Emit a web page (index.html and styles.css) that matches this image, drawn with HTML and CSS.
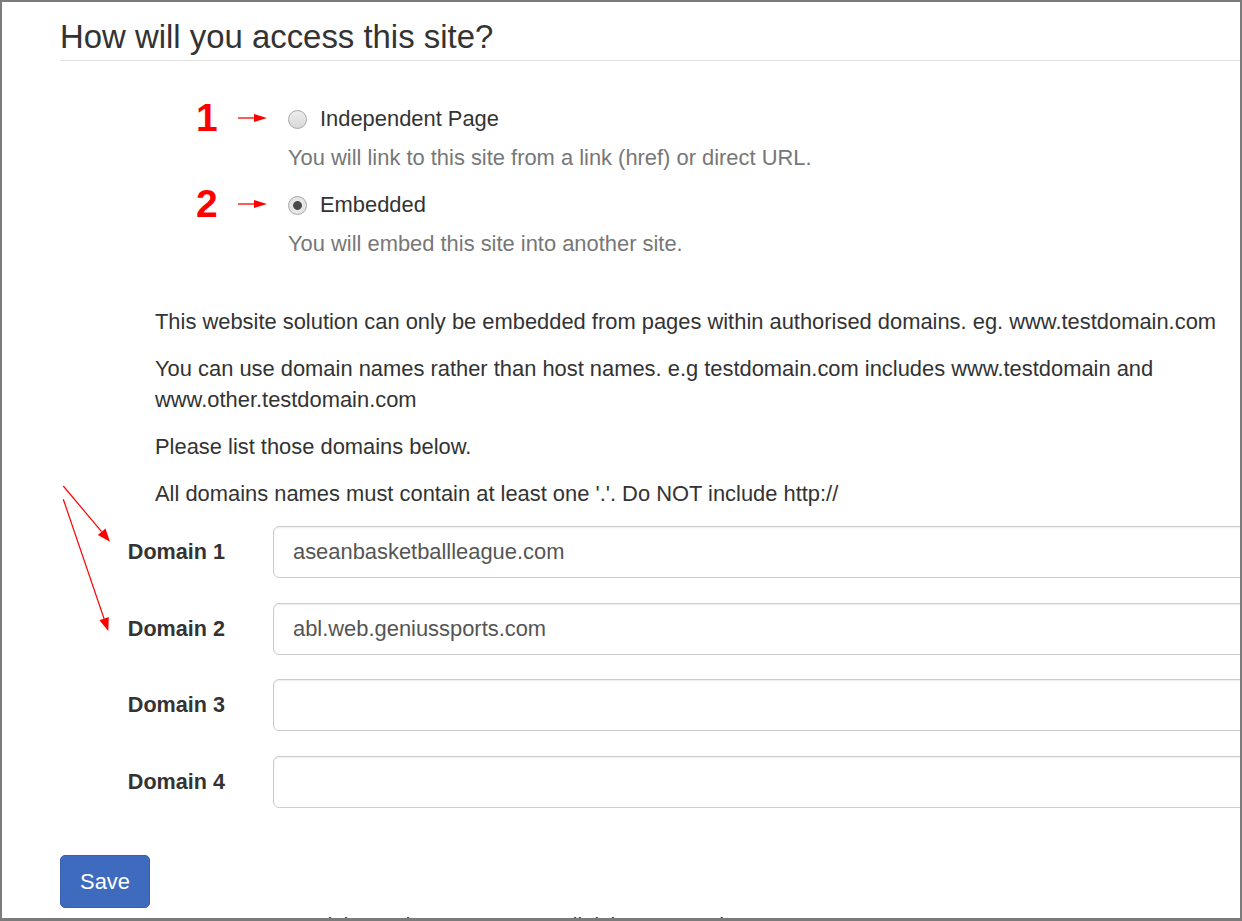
FILE: index.html
```html
<!DOCTYPE html>
<html lang="en">
<head>
<meta charset="utf-8">
<title>How will you access this site?</title>
<link rel="stylesheet" href="styles.css">
</head>
<body>
<div class="frame">
  <div class="page">
    <h1 class="title">How will you access this site?</h1>

    <div class="access">
      <div class="choice">
        <div class="marker">
          <span class="num">1</span>
          <svg class="pointer" width="30" height="10" viewBox="0 0 30 10"><line x1="0" y1="5" x2="17" y2="5" stroke="#ff0000" stroke-width="1.3"/><polygon points="16,1 29,5 16,9" fill="#ff0000"/></svg>
        </div>
        <label class="option"><span class="radio"></span>Independent Page</label>
        <p class="help">You will link to this site from a link (href) or direct URL.</p>
      </div>
      <div class="choice">
        <div class="marker">
          <span class="num">2</span>
          <svg class="pointer" width="30" height="10" viewBox="0 0 30 10"><line x1="0" y1="5" x2="17" y2="5" stroke="#ff0000" stroke-width="1.3"/><polygon points="16,1 29,5 16,9" fill="#ff0000"/></svg>
        </div>
        <label class="option"><span class="radio checked"></span>Embedded</label>
        <p class="help">You will embed this site into another site.</p>
      </div>
    </div>

    <div class="info">
      <p>This website solution can only be embedded from pages within authorised domains. eg. www.testdomain.com</p>
      <p>You can use domain names rather than host names. e.g testdomain.com includes www.testdomain and www.other.testdomain.com</p>
      <p>Please list those domains below.</p>
      <p>All domains names must contain at least one '.'. Do NOT include http://</p>
    </div>

    <div class="domains">
      <svg class="callout" width="60" height="160" viewBox="0 0 60 160">
        <line x1="3.3" y1="5" x2="41.6" y2="50.7" stroke="#ff0000" stroke-width="1.2"/>
        <polygon points="50,60.7 37.8,54 45.5,47.5" fill="#ff0000"/>
        <line x1="3.3" y1="18.3" x2="44.1" y2="137.7" stroke="#ff0000" stroke-width="1.2"/>
        <polygon points="48.3,150 39.4,139.3 48.8,136.1" fill="#ff0000"/>
      </svg>
      <div class="field"><label class="field-label">Domain 1</label><input class="field-input" type="text" value="aseanbasketballleague.com"></div>
      <div class="field"><label class="field-label">Domain 2</label><input class="field-input" type="text" value="abl.web.geniussports.com"></div>
      <div class="field"><label class="field-label">Domain 3</label><input class="field-input" type="text" value=""></div>
      <div class="field"><label class="field-label">Domain 4</label><input class="field-input" type="text" value=""></div>
    </div>

    <button class="save" type="button">Save</button>
    <footer class="footer">© Copyright Genius Sports 2019. All rights reserved.</footer>
  </div>
</div>
</body>
</html>
```

FILE: styles.css
```css
html, body {
  margin: 0;
  padding: 0;
  background: #ffffff;
}

body {
  font-family: "Liberation Sans", Arial, sans-serif;
  color: #333333;
}

.frame {
  box-sizing: border-box;
  width: 1242px;
  height: 921px;
  border-style: solid;
  border-color: #7b7b7b;
  border-width: 2px 2px 3px 2px;
  overflow: hidden;
  background: #ffffff;
}

.page {
  width: 1260px;
  padding-left: 58px;
}

.title {
  margin: 17px 0 0;
  padding-bottom: 5px;
  font-size: 32.9px;
  line-height: 36px;
  font-weight: 400;
  color: #333333;
  border-bottom: 1px solid #e1e1e1;
}

.access {
  margin: 42px 0 0 135px;
  display: flex;
  flex-direction: column;
  gap: 16px;
}

.choice {
  display: grid;
  grid-template-columns: 93px 1fr;
  row-gap: 8px;
  font-size: 21.9px;
  line-height: 31px;
}

.marker {
  display: flex;
  align-items: center;
  height: 31px;
  margin-top: -1px;
}

.num {
  display: inline-block;
  width: 43px;
  padding-left: 1px;
  margin-right: -1px;
  font-size: 39px;
  line-height: 31px;
  font-weight: 700;
  color: #ff0000;
}

.pointer {
  display: block;
}

.option {
  display: flex;
  align-items: center;
  gap: 13px;
  color: #333333;
}

.radio {
  box-sizing: border-box;
  width: 19px;
  height: 19px;
  border-radius: 50%;
  border: 1px solid #a9a9a9;
  background: linear-gradient(#ededed, #d9d9d9);
  flex: none;
  position: relative;
  top: 1px;
}

.radio.checked {
  background: radial-gradient(circle, #4a4a4a 0 4px, #e9e9e9 4.8px, #dcdcdc 100%);
}

.help {
  grid-column: 2;
  margin: 0;
  color: #777777;
}

.info {
  margin: 47px 0 0 95px;
  width: 1140px;
  font-size: 21.9px;
  line-height: 31px;
}

.info p {
  margin: 0 0 16px;
}

.domains {
  position: relative;
  margin-top: 17px;
  display: flex;
  flex-direction: column;
  gap: 24.5px;
}

.callout {
  position: absolute;
  left: 0;
  top: -45px;
  overflow: visible;
}

.field {
  display: grid;
  grid-template-columns: 213px 1fr;
  align-items: center;
}

.field-label {
  padding-right: 48px;
  text-align: right;
  font-weight: 700;
  font-size: 21.6px;
  color: #333333;
}

.field-input {
  box-sizing: border-box;
  height: 52px;
  width: 100%;
  padding: 0 19px;
  border: 1px solid #cccccc;
  border-radius: 6px;
  box-shadow: inset 0 1px 2px rgba(0, 0, 0, 0.08);
  font-family: "Liberation Sans", Arial, sans-serif;
  font-size: 21.9px;
  color: #555555;
  background: #ffffff;
  outline: none;
}

.save {
  display: block;
  margin-top: 47.5px;
  width: 90px;
  height: 53px;
  padding: 0;
  border: 1px solid #3561b0;
  border-radius: 5px;
  background: #3f6bbf;
  color: #ffffff;
  font-family: "Liberation Sans", Arial, sans-serif;
  font-size: 21.9px;
}

.footer {
  margin: 0.5px 0 0 192px;
  font-size: 20.6px;
  line-height: 31px;
  color: #333333;
}
```
